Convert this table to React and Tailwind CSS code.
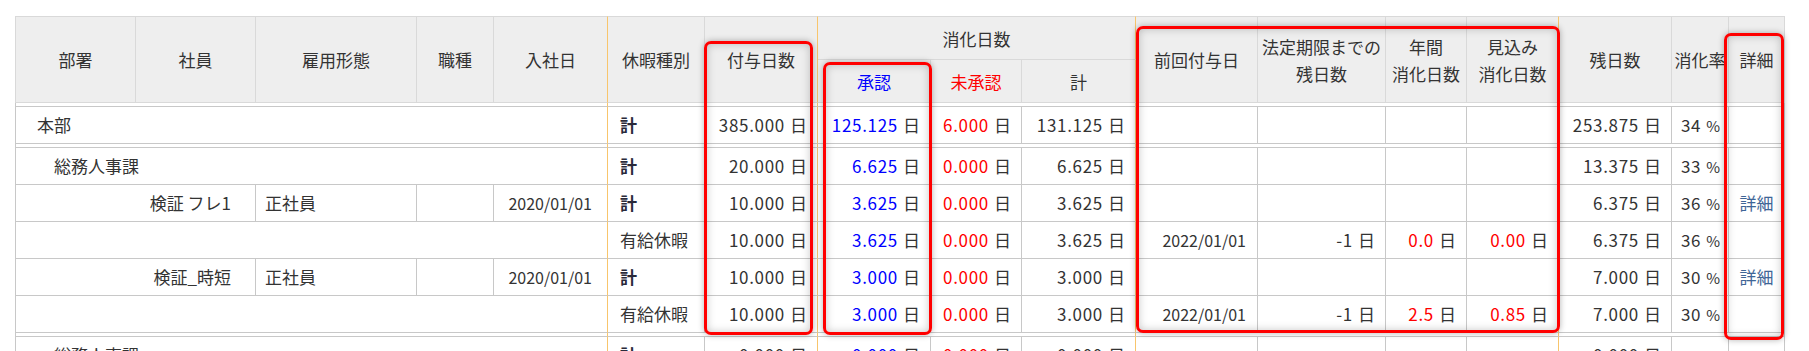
import React from "react";

// column widths (px) of the leave summary grid
const COLS = [121, 120, 161, 77, 114, 97, 113, 113, 91, 114, 122, 128, 81, 92, 113, 57, 56];
// columns whose right edge is a pane split (orange line)
const PANE_ENDS = [4, 6, 9, 13];

const groups = [
  [
    {
      type: "dept",
      label: "本部",
      pad: "pl-[21px]",
      kind: "計",
      grant: "385.000",
      appr: "125.125",
      unappr: "6.000",
      total: "131.125",
      remain: "253.875",
      rate: "34",
    },
  ],
  [
    {
      type: "dept",
      label: "総務人事課",
      pad: "pl-[38px]",
      kind: "計",
      grant: "20.000",
      appr: "6.625",
      unappr: "0.000",
      total: "6.625",
      remain: "13.375",
      rate: "33",
    },
    {
      type: "emp",
      name: "検証 フレ1",
      emp: "正社員",
      join: "2020/01/01",
      kind: "計",
      grant: "10.000",
      appr: "3.625",
      unappr: "0.000",
      total: "3.625",
      remain: "6.375",
      rate: "36",
      detail: true,
    },
    {
      type: "leave",
      kind: "有給休暇",
      grant: "10.000",
      appr: "3.625",
      unappr: "0.000",
      total: "3.625",
      prev: "2022/01/01",
      legal: "-1",
      annual: "0.0",
      expect: "0.00",
      remain: "6.375",
      rate: "36",
    },
    {
      type: "emp",
      name: "検証_時短",
      emp: "正社員",
      join: "2020/01/01",
      kind: "計",
      grant: "10.000",
      appr: "3.000",
      unappr: "0.000",
      total: "3.000",
      remain: "7.000",
      rate: "30",
      detail: true,
    },
    {
      type: "leave",
      kind: "有給休暇",
      grant: "10.000",
      appr: "3.000",
      unappr: "0.000",
      total: "3.000",
      prev: "2022/01/01",
      legal: "-1",
      annual: "2.5",
      expect: "0.85",
      remain: "7.000",
      rate: "30",
    },
  ],
  [
    {
      type: "dept",
      label: "総務人事課",
      pad: "pl-[38px]",
      kind: "計",
      grant: "0.000",
      appr: "0.000",
      unappr: "0.000",
      total: "0.000",
      remain: "0.000",
    },
  ],
];

function edge(start, end, header) {
  const c = ["border-r border-b"];
  c.push(header ? "border-b-[#d9d9d9]" : "border-b-[#c8c8c8]");
  if (PANE_ENDS.includes(end)) c.push("border-r-[#f8c56c]");
  else c.push(header ? "border-r-[#d9d9d9]" : "border-r-[#c8c8c8]");
  if (start === 0) c.push(header ? "border-l border-l-[#d9d9d9]" : "border-l border-l-[#c8c8c8]");
  return c.join(" ");
}

function spacerEdge(i) {
  let c = "p-0 border-b border-b-[#c8c8c8]";
  if (i === 0) c += " border-l border-l-[#c8c8c8]";
  if (PANE_ENDS.includes(i)) c += " border-r border-r-[#f8c56c]";
  else if (i === 16) c += " border-r border-r-[#c8c8c8]";
  return c;
}

const Num = ({ v, tone = "" }) =>
  v == null ? null : (
    <>
      <span className={`tracking-[0.7px] ${tone}`}>{v}</span>
      <span className="ml-[5px]">日</span>
    </>
  );

function Spacer() {
  return (
    <tr className="h-[4px]">
      {COLS.map((_, i) => (
        <td key={i} className={spacerEdge(i)} />
      ))}
    </tr>
  );
}

function BodyRow({ r }) {
  const num = "text-right pr-[10px]";
  return (
    <tr className="h-[37px]">
      {r.type === "dept" && (
        <td colSpan={5} className={`${edge(0, 4)} ${r.pad} text-left`}>
          {r.label}
        </td>
      )}
      {r.type === "emp" && (
        <>
          <td colSpan={2} className={`${edge(0, 1)} pr-[24px] text-right`}>
            {r.name}
          </td>
          <td className={`${edge(2, 2)} pl-[9px] text-left`}>{r.emp}</td>
          <td className={edge(3, 3)} />
          <td className={`${edge(4, 4)} pr-[15px] text-right text-[16px]`}>
            {r.join}
          </td>
        </>
      )}
      {r.type === "leave" && <td colSpan={5} className={edge(0, 4)} />}
      <td
        className={`${edge(5, 5)} pl-3 text-left ${
          r.kind === "計" ? "font-bold text-[#2a2a3a]" : ""
        }`}
      >
        {r.kind}
      </td>
      <td className={`${edge(6, 6)} ${num}`}>
        <Num v={r.grant} />
      </td>
      <td className={`${edge(7, 7)} ${num}`}>
        <Num v={r.appr} tone="text-[#0000ff]" />
      </td>
      <td className={`${edge(8, 8)} ${num}`}>
        <Num v={r.unappr} tone="text-[#ff0000]" />
      </td>
      <td className={`${edge(9, 9)} ${num}`}>
        <Num v={r.total} />
      </td>
      <td className={`${edge(10, 10)} pr-[11px] text-right text-[16px]`}>
        {r.prev}
      </td>
      <td className={`${edge(11, 11)} ${num}`}>
        <Num v={r.legal} />
      </td>
      <td className={`${edge(12, 12)} ${num}`}>
        <Num v={r.annual} tone="text-[#ff0000]" />
      </td>
      <td className={`${edge(13, 13)} ${num}`}>
        <Num v={r.expect} tone="text-[#ff0000]" />
      </td>
      <td className={`${edge(14, 14)} ${num}`}>
        <Num v={r.remain} />
      </td>
      <td className={`${edge(15, 15)} pr-[8px] text-right`}>
        {r.rate && (
          <>
            <span className="tracking-[0.7px]">{r.rate}</span>
            <span className="ml-[5px] text-[15px]">%</span>
          </>
        )}
      </td>
      <td className={`${edge(16, 16)} text-center`}>
        {r.detail && <span className="text-[#3e6596]">詳細</span>}
      </td>
    </tr>
  );
}

function Head({ i, span = 1, rowSpan, top, className = "", children }) {
  return (
    <th
      colSpan={span}
      rowSpan={rowSpan}
      className={`${edge(i, i + span - 1, true)} ${
        top ? "border-t border-t-[#d9d9d9]" : ""
      } bg-[#eeeeee] p-0 text-center font-normal leading-[27px] whitespace-nowrap ${className}`}
    >
      {children}
    </th>
  );
}

export default function App() {
  return (
    <div className="relative h-[351px] w-[1809px] overflow-hidden bg-white pl-[15px] pt-4 font-['Noto_Sans_CJK_JP',sans-serif] text-[17px] text-[#333]">
      <table className="table-fixed border-separate border-spacing-0 w-[1770px]">
        <colgroup>
          {COLS.map((w, i) => (
            <col key={i} style={{ width: w }} />
          ))}
        </colgroup>
        <thead>
          <tr className="h-[44px]">
            {["部署", "社員", "雇用形態", "職種", "入社日", "休暇種別", "付与日数"].map((t, i) => (
              <Head key={t} i={i} rowSpan={2} top>
                {t}
              </Head>
            ))}
            <Head i={7} span={3} top>
              消化日数
            </Head>
            <Head i={10} rowSpan={2} top>
              前回付与日
            </Head>
            <Head i={11} rowSpan={2} top>
              法定期限までの
              <br />
              残日数
            </Head>
            <Head i={12} rowSpan={2} top>
              年間
              <br />
              消化日数
            </Head>
            <Head i={13} rowSpan={2} top>
              見込み
              <br />
              消化日数
            </Head>
            <Head i={14} rowSpan={2} top>
              残日数
            </Head>
            <Head i={15} rowSpan={2} top>
              消化率
            </Head>
            <Head i={16} rowSpan={2} top>
              詳細
            </Head>
          </tr>
          <tr className="h-[43px]">
            <Head i={7} className="text-[#0000ff]">
              承認
            </Head>
            <Head i={8} className="text-[#ff0000]">
              未承認
            </Head>
            <Head i={9}>計</Head>
          </tr>
        </thead>
        <tbody>
          {groups.map((g, gi) => (
            <React.Fragment key={gi}>
              <Spacer />
              {g.map((r, ri) => (
                <BodyRow key={ri} r={r} />
              ))}
            </React.Fragment>
          ))}
        </tbody>
      </table>

      {/* red annotation frames */}
      <div className="pointer-events-none absolute left-[704px] top-[41px] h-[294px] w-[109px] rounded-[7px] border-[3px] border-[#ff0000] shadow-[0_0_6px_rgba(0,0,0,0.3),inset_0_0_8px_rgba(0,0,0,0.22)]" />
      <div className="pointer-events-none absolute left-[823px] top-[62px] h-[273px] w-[109px] rounded-[7px] border-[3px] border-[#ff0000] shadow-[0_0_6px_rgba(0,0,0,0.3),inset_0_0_8px_rgba(0,0,0,0.22)]" />
      <div className="pointer-events-none absolute left-[1136px] top-[26px] h-[307px] w-[424px] rounded-[7px] border-[3px] border-[#ff0000] shadow-[0_0_6px_rgba(0,0,0,0.3),inset_0_0_8px_rgba(0,0,0,0.22)]" />
      <div className="pointer-events-none absolute left-[1724px] top-[33px] h-[307px] w-[60px] rounded-[7px] border-[3px] border-[#ff0000] shadow-[0_0_6px_rgba(0,0,0,0.3),inset_0_0_8px_rgba(0,0,0,0.22)]" />
    </div>
  );
}
